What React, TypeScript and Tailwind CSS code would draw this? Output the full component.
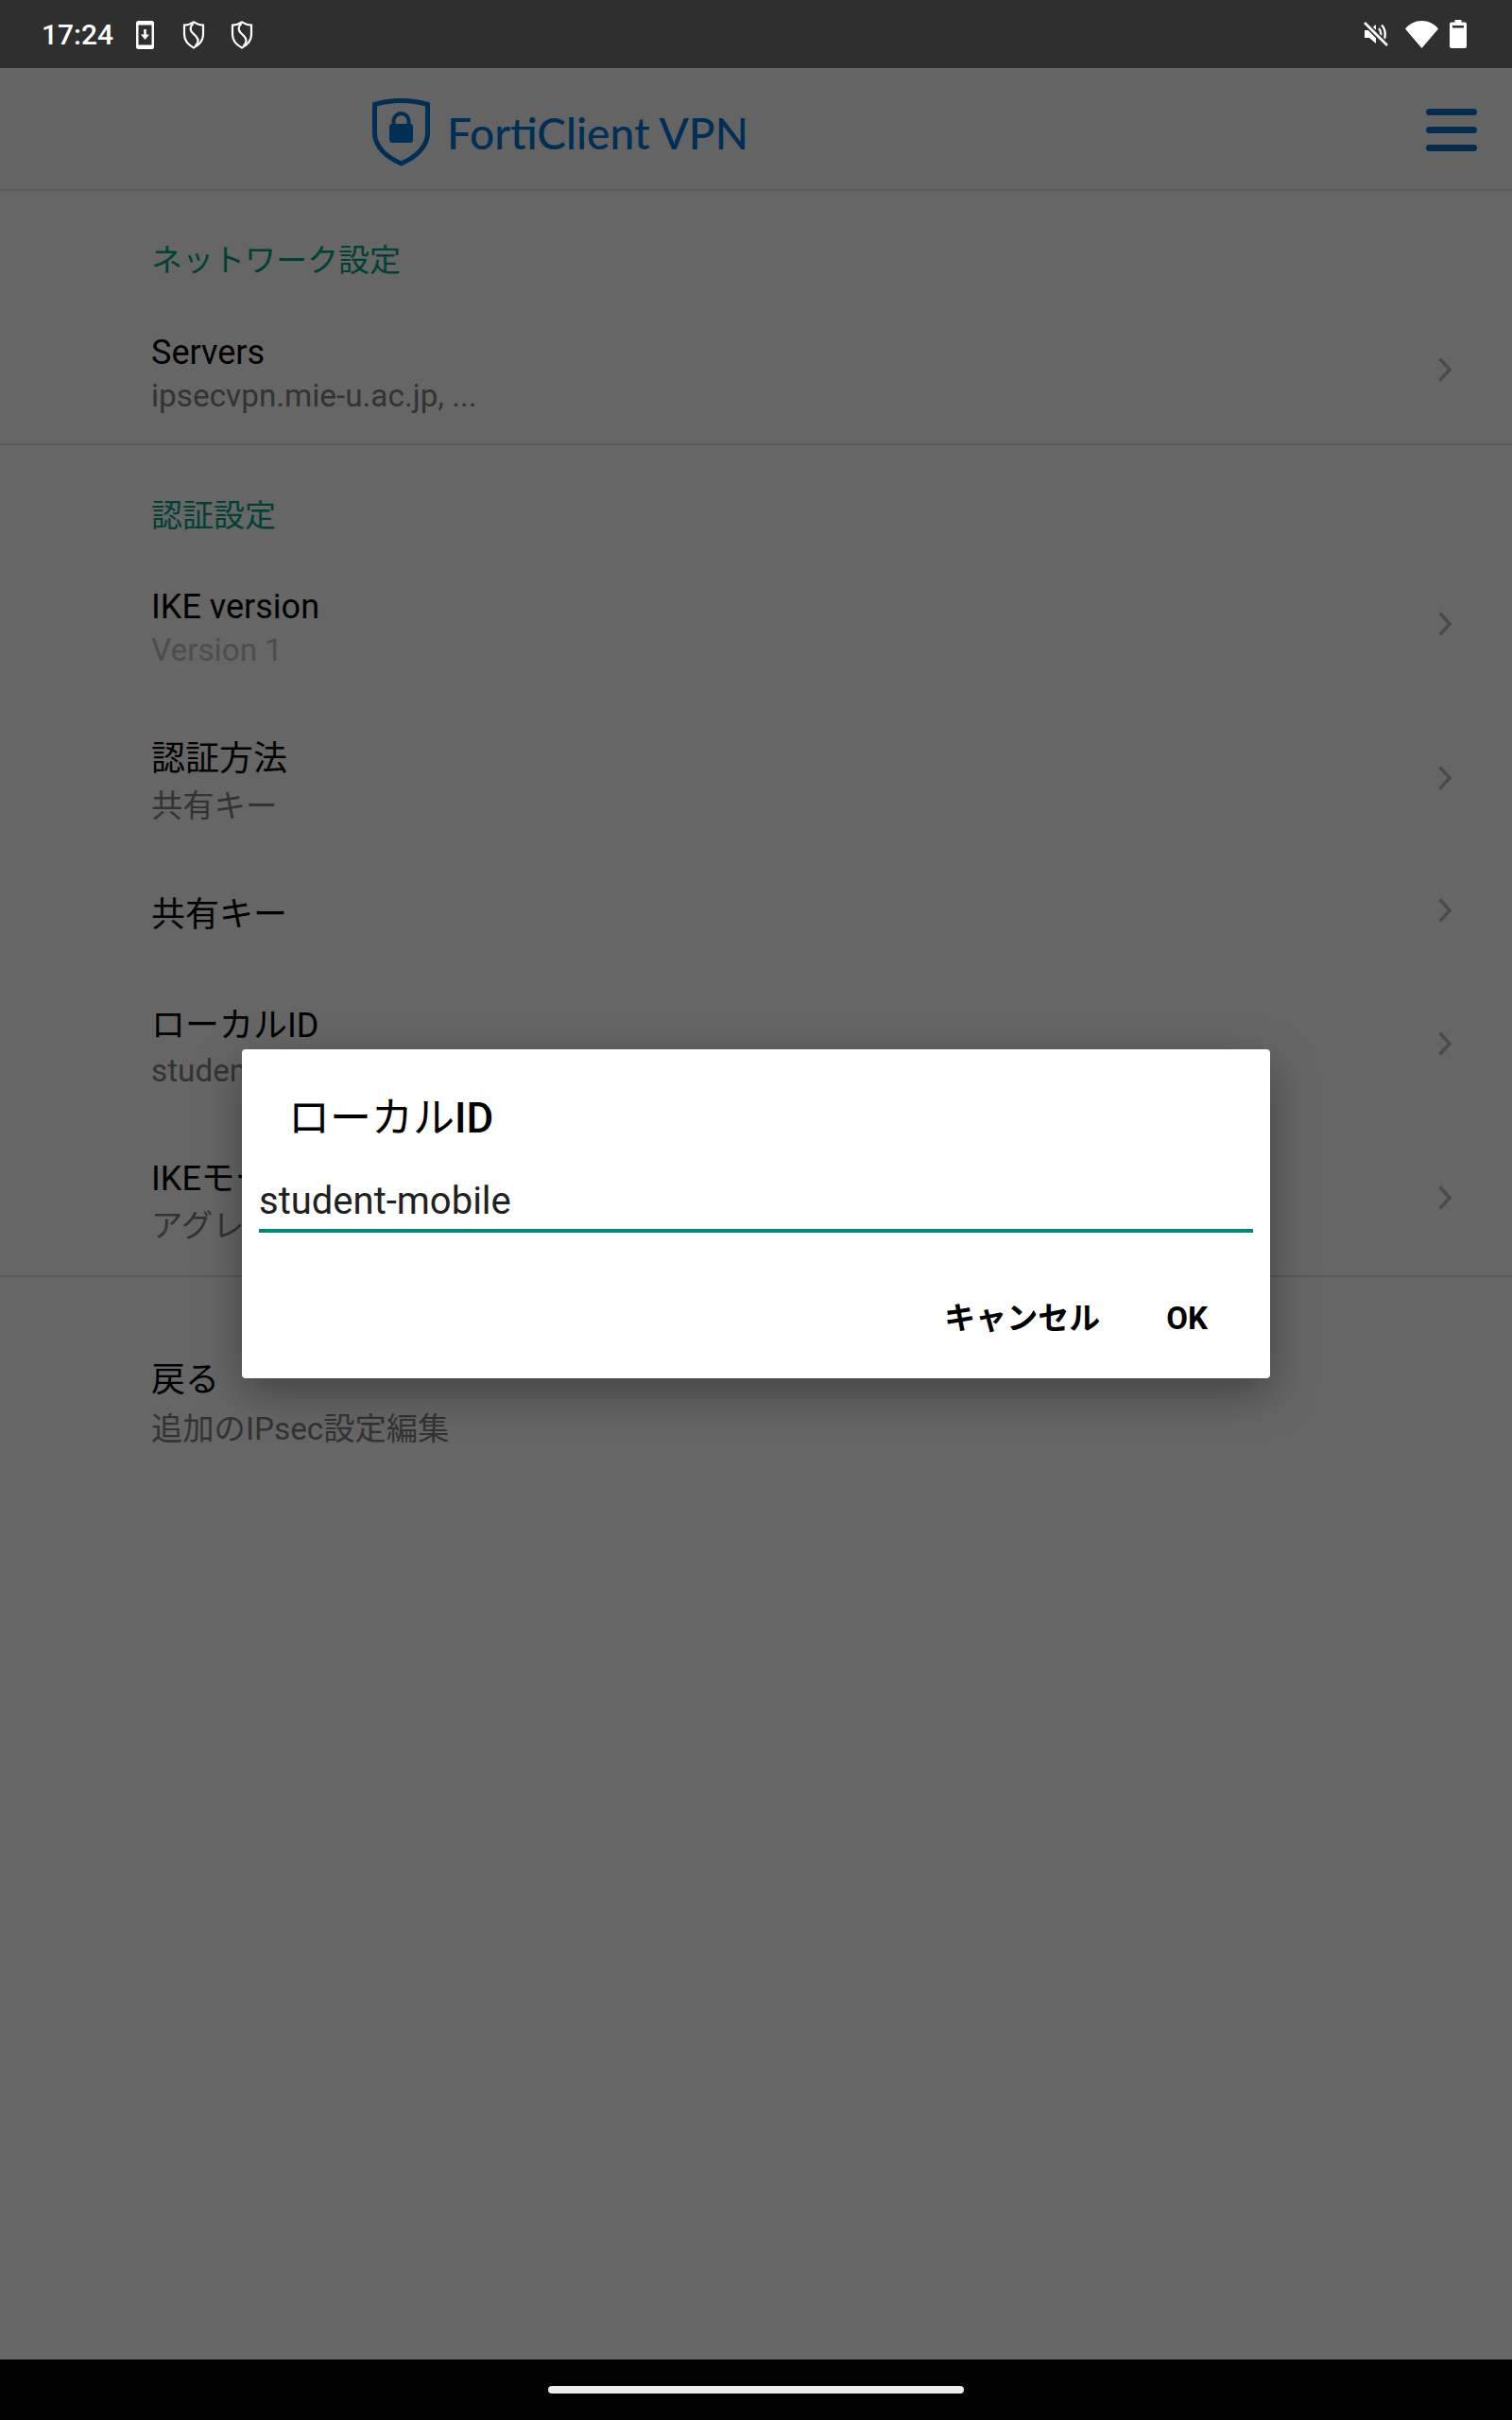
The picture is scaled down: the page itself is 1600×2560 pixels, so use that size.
const cjk = { fontFamily: '"Roboto", "Noto Sans CJK JP", sans-serif' };

type RowData = {
  title: string;
  sub?: string;
  subColor?: string;
  gap: string;
  leading: string;
  chevron?: boolean;
  bottom?: string;
};

const authRows: RowData[] = [
  { title: "IKE version", sub: "Version 1", subColor: "text-[#4d4d4d]", gap: "mt-[54px]", leading: "leading-[45px]", chevron: true },
  { title: "認証方法", sub: "共有キー", gap: "mt-[68px]", leading: "leading-[50px]", chevron: true },
  { title: "共有キー", gap: "mt-[64px]", leading: "leading-[52px]", chevron: true },
  { title: "ローカルID", sub: "student-mobile", gap: "mt-[68px]", leading: "leading-[47px]", chevron: true },
  { title: "IKEモード", sub: "アグレッシブ", gap: "mt-[67px]", leading: "leading-[49px]", chevron: true, bottom: "mb-[28px]" },
];

function PhoneDownloadIcon() {
  return (
    <svg width="19" height="30" viewBox="0 0 19 30" className="shrink-0">
      <rect width="19" height="30" rx="2.5" fill="#fff" />
      <rect x="2.5" y="4.5" width="14" height="21" fill="#2f2f2f" />
      <path d="M8.2 9h2.6v5.5H14L9.5 20 5 14.5h3.2z" fill="#fff" />
    </svg>
  );
}

function VpnShieldIcon() {
  return (
    <svg width="24" height="30" viewBox="0 0 24 30" fill="none" stroke="#fff" strokeWidth="2.2" className="shrink-0">
      <path d="M12 1.4c3 2 6.2 3 10 3.2v10c0 6-4 10.800-10 14-6-3.200-10-8-10-14v-10c3.800-.2 7-1.200 10-3.200z" />
      <path d="M11.500 3c-3.500 2.500-3.800 6.500-1 9.500l4 4c2.800 3 2.400 7-1 10.500" strokeLinejoin="round" />
    </svg>
  );
}

function MuteIcon() {
  return (
    <svg width="28" height="28" viewBox="0 0 28 28" fill="none" className="shrink-0">
      <path d="M2 10h5l7-6v20l-7-6H2z" fill="#fff" />
      <path d="M17 8c3 3 3 9 0 12M20 4.500c5 5 5 14 0 19" stroke="#fff" strokeWidth="2.400" />
      <path d="M2 2l24 24" stroke="#2f2f2f" strokeWidth="6" />
      <path d="M2 2l24 24" stroke="#fff" strokeWidth="2.600" />
    </svg>
  );
}

function WifiIcon() {
  return (
    <svg width="35" height="29" viewBox="0 0 35 29" className="shrink-0">
      <path d="M17.500 29 0 8.500C4.500 3 10.500 0 17.500 0S30.500 3 35 8.500z" fill="#fff" />
    </svg>
  );
}

function BatteryIcon() {
  return (
    <svg width="18" height="30" viewBox="0 0 18 30" className="shrink-0">
      <path d="M5.500 0h7v2.500H16a2 2 0 0 1 2 2V28a2 2 0 0 1-2 2H2a2 2 0 0 1-2-2V4.500a2 2 0 0 1 2-2h3.500z" fill="#fff" />
      <rect x="3" y="6" width="12" height="2.500" fill="#2f2f2f" />
    </svg>
  );
}

function LogoShield() {
  return (
    <svg width="61" height="72" viewBox="0 0 61 72" fill="none" className="shrink-0">
      <path
        d="M2.500 6.500C20 1 41 1 58.500 6.500V37c0 13-11 24.500-28 32C13.500 61.500 2.500 50 2.500 37z"
        stroke="#002f55"
        strokeWidth="5"
      />
      <path d="M22.500 28v-4a8 8 0 0 1 16 0v4" stroke="#002f55" strokeWidth="4" />
      <rect x="18" y="27" width="25" height="20" rx="3" fill="#002f55" />
    </svg>
  );
}

function Chevron() {
  return (
    <svg width="14" height="26" viewBox="0 0 14 26" fill="none" className="mb-[10px] shrink-0">
      <path d="M1.500 1.500 12 13 1.500 24.500" stroke="#4b4b4b" strokeWidth="3.500" />
    </svg>
  );
}

function Row({ title, sub, subColor, gap, leading, chevron, bottom }: RowData) {
  return (
    <div className={`flex items-center justify-between pl-[160px] pr-[64px] ${gap} ${bottom ?? ""}`}>
      <div className={leading}>
        <div className="text-[36px] text-black">{title}</div>
        {sub && <div className={`text-[33.3px] ${subColor ?? "text-[#333333]"}`}>{sub}</div>}
      </div>
      {chevron && <Chevron />}
    </div>
  );
}

function SectionTitle({ pad, children }: { pad: string; children: string }) {
  return <div className={`pl-[160px] text-[33px] leading-[40px] text-[#004035] ${pad}`}>{children}</div>;
}

export default function App() {
  return (
    <div className="relative flex h-screen flex-col bg-[#666666]" style={cjk}>
      <div className="flex h-[72px] shrink-0 items-center justify-between bg-[#2f2f2f] pl-[44px] pr-[48px]">
        <div className="flex items-center">
          <span className="w-[100px] text-[30px] font-medium text-white">17:24</span>
          <div className="mt-[2px] flex items-center">
            <PhoneDownloadIcon />
            <div className="ml-[30px] flex gap-[27px]">
              <VpnShieldIcon />
              <VpnShieldIcon />
            </div>
          </div>
        </div>
        <div className="flex items-center">
          <MuteIcon />
          <div className="ml-[17px] mr-[12px]">
            <WifiIcon />
          </div>
          <BatteryIcon />
        </div>
      </div>

      <div className="flex h-[130px] shrink-0 items-center border-b-2 border-[#595959] bg-[#646464] pl-[394px] pr-[37px] pt-[8px]">
        <LogoShield />
        <span
          className="ml-[18px] text-[46px] font-medium text-[#002f55]"
          style={{ fontFamily: '"Lato", sans-serif' }}
        >
          FortiClient VPN
        </span>
        <div className="mb-[6px] ml-auto flex flex-col gap-[12px]">
          <div className="h-[7px] w-[54px] rounded-full bg-[#032c4f]" />
          <div className="h-[7px] w-[54px] rounded-full bg-[#032c4f]" />
          <div className="h-[7px] w-[54px] rounded-full bg-[#032c4f]" />
        </div>
      </div>

      <div className="flex-1">
        <div className="border-b-2 border-[#595959]">
          <SectionTitle pad="pt-[54px]">ネットワーク設定</SectionTitle>
          <Row
            title="Servers"
            sub="ipsecvpn.mie-u.ac.jp, ..."
            gap="mt-[55px]"
            leading="leading-[45px]"
            chevron
            bottom="mb-[28px]"
          />
        </div>
        <div className="border-b-2 border-[#595959]">
          <SectionTitle pad="pt-[55px]">認証設定</SectionTitle>
          {authRows.map((row) => (
            <Row key={row.title} {...row} />
          ))}
        </div>
        <Row title="戻る" sub="追加のIPsec設定編集" gap="mt-[83px]" leading="leading-[52px]" />
      </div>

      <div className="flex h-[64px] shrink-0 justify-center bg-black pt-[28px]">
        <div className="h-[8px] w-[440px] rounded-full bg-[#ebebeb]" />
      </div>

      <div className="absolute left-[256px] top-[1110px] h-[348px] w-[1088px] rounded-[4px] bg-white shadow-[0_16px_48px_rgba(0,0,0,0.35)]">
        <div className="pl-[49px] pt-[47px] text-[44px] leading-[52px] text-black">
          ローカル<span className="font-medium">ID</span>
        </div>
        <div className="mx-[18px] mt-[38px] border-b-[4px] border-[#00897b] pb-[5px] text-[40px] leading-[48px] text-[#212121]">
          student-mobile
        </div>
        <div className="mt-[67px] flex justify-end pr-[66px] text-[33px] font-bold leading-[48px] text-black">
          <span className="mr-[70px]">キャンセル</span>
          <span>OK</span>
        </div>
      </div>
    </div>
  );
}
